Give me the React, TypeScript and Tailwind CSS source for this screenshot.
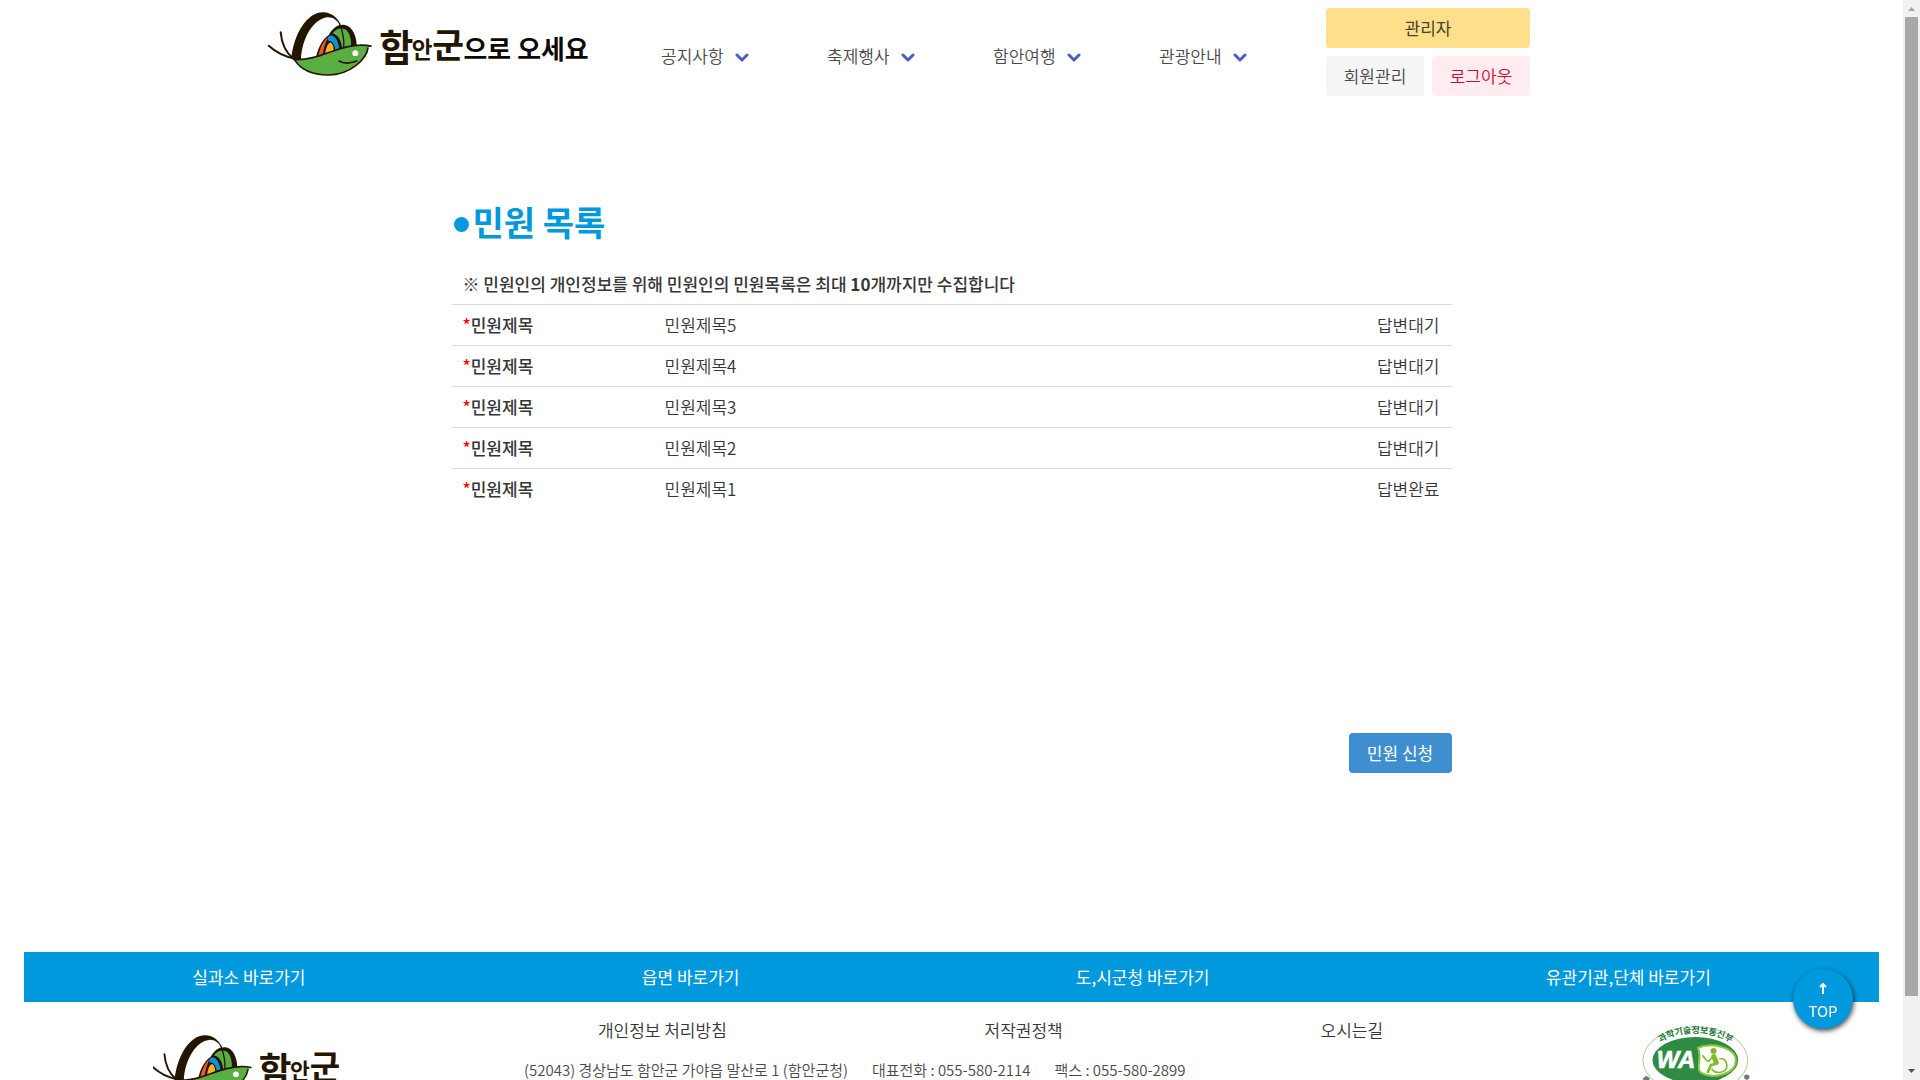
import React from "react";

function Emblem() {
  return (
    <g strokeLinecap="round" strokeLinejoin="round">
      <path d="M55 134 Q88 164 132 172" fill="none" stroke="#231500" strokeWidth="6" />
      <path d="M91 93 Q95 145 130 174" fill="none" stroke="#231500" strokeWidth="6" />
      <path d="M123 173 C130 100 170 33 218 33 C250 33 270 58 272 76 C262 56 247 46 231 48 C190 53 155 110 152 175 Z" fill="#231500" />
      <path d="M236 102 C248 78 266 69 284 71 C306 75 321 102 320 140 L240 150 Z" fill="#231500" />
      <path d="M247 97 C258 80 283 75 294 92 C303 106 304 124 303 138 L276 144 C275 118 264 100 247 97 Z" fill="#5aae41" />
      <path d="M268 66 C276 86 284 108 281 140" fill="none" stroke="#231500" strokeWidth="4" />
      <path d="M197 170 C204 136 222 104 246 97 C264 100 273 124 272 148 Z" fill="#231500" />
      <path d="M204 166 C208 144 219 120 232 109 C226 126 219 146 217 164 Z" fill="#e9562e" />
      <path d="M233 108 C250 92 266 118 268 146 L256 150 C254 128 246 118 232 118 Z" fill="#0a93d8" />
      <path d="M225 160 C227 138 235 124 242 124 C250 130 252 142 250 153 Z" fill="#fbb02c" />
      <path d="M132 175 C205 180 262 132 330 132 Q348 132 363 135 L354 140 C360 158 302 222 235 222 C185 222 152 208 132 175 Z" fill="#5aae41" />
      <path d="M132 175 C205 180 262 132 330 132 Q348 131 363 135 M354 141 C350 172 302 222 235 222 C185 222 152 208 132 175" fill="none" stroke="#231500" strokeWidth="5" />
      <circle cx="316" cy="156" r="9" fill="#fff" />
      <path d="M267 180 Q288 192 320 180" fill="none" stroke="#231500" strokeWidth="5" />
    </g>
  );
}

function CountyName() {
  return (
    <>
      <tspan x="388" y="182" fontSize="112">함</tspan>
      <tspan x="486" y="170" fontSize="68">안</tspan>
      <tspan x="548" y="170" fontSize="104">군</tspan>
    </>
  );
}

function HeaderLogo() {
  return (
    <svg viewBox="40 20 990 220" className="block h-[73px] w-[330px]" role="img" aria-label="함안군으로 오세요">
      <Emblem />
      <text className="font-['Noto_Sans_CJK_KR',sans-serif] font-bold" fill="#231500">
        <CountyName />
      </text>
      <text className="font-['Noto_Sans_CJK_KR',sans-serif] font-bold" fill="#0c0a06" fontSize="78">
        <tspan x="642" y="174">으로</tspan>
        <tspan x="804" y="174">오세요</tspan>
      </text>
    </svg>
  );
}

function FooterLogo() {
  return (
    <svg viewBox="55 30 620 200" className="block h-[64px] w-[197px]" role="img" aria-label="함안군">
      <Emblem />
      <text className="font-['Noto_Sans_CJK_KR',sans-serif] font-bold" fill="#231500">
        <CountyName />
      </text>
    </svg>
  );
}

function WebAccessMark() {
  return (
    <svg viewBox="0 0 330 220" className="block h-[73px] w-[110px]" role="img" aria-label="과학기술정보통신부 WA 웹 접근성">
      <defs>
        <path id="ministry" d="M44 58 C100 10 218 10 278 58" />
      </defs>
      <ellipse cx="160" cy="103" rx="158" ry="101" fill="#fff" stroke="#a5cf8a" strokeWidth="3" />
      <text className="font-['Noto_Sans_CJK_KR',sans-serif] font-bold" fontSize="27" fill="#22753a">
        <textPath href="#ministry" startOffset="50%" textAnchor="middle">과학기술정보통신부</textPath>
      </text>
      <ellipse cx="160" cy="103" rx="129" ry="70" fill="#2f8b43" />
      <path d="M168 66 C200 48 282 62 282 104 C282 146 212 162 176 140 C160 126 182 100 168 66 Z" fill="#fff" stroke="#8cc63f" strokeWidth="6" />
      <text x="44" y="126" className="font-['Liberation_Sans',sans-serif] font-bold italic" fontSize="72" fill="#fff" stroke="#fff" strokeWidth="2">
        WA
      </text>
      <g fill="none" stroke="#7fba2c" strokeLinecap="round" strokeLinejoin="round">
        <path d="M216 92 L223 110" strokeWidth="15" />
        <path d="M223 114 L207 118 L198 138" strokeWidth="8" />
        <path d="M212 92 L201 106 L194 104 L183 90" strokeWidth="5" />
        <path d="M234 98 C258 98 262 130 242 138 C228 143 214 138 210 130" strokeWidth="5" />
      </g>
      <circle cx="215" cy="75" r="9" fill="#7fba2c" />
      <path d="M90 156 Q160 184 236 156" fill="none" stroke="#2f8b43" strokeWidth="6" />
      <path d="M0 160 l12 -10 l12 8 l-8 10 Z" fill="#777" />
      <circle cx="315" cy="154" r="8" fill="#777" />
    </svg>
  );
}

const menu = ["공지사항", "축제행사", "함안여행", "관광안내"];

const complaints = [
  { title: "민원제목5", status: "답변대기" },
  { title: "민원제목4", status: "답변대기" },
  { title: "민원제목3", status: "답변대기" },
  { title: "민원제목2", status: "답변대기" },
  { title: "민원제목1", status: "답변완료" },
];

const shortcuts = ["실과소 바로가기", "읍면 바로가기", "도,시군청 바로가기", "유관기관,단체 바로가기"];
const policies = ["개인정보 처리방침", "저작권정책", "오시는길"];

function Header() {
  return (
    <header className="flex items-start pt-2 pl-[263px]">
      <a href="#home" className="shrink-0">
        <HeaderLogo />
      </a>
      <nav className="ml-[68px] flex pt-9">
        {menu.map((label) => (
          <button key={label} type="button" className="flex w-[166px] items-center gap-[11px] text-[#4a4a4a]">
            {label}
            <svg viewBox="0 0 14 10" className="mt-1 h-[10px] w-[14px]" fill="none" stroke="#485fc7" strokeWidth="3" strokeLinecap="round" strokeLinejoin="round" aria-hidden="true">
              <path d="M2 2 L7 7 L12 2" />
            </svg>
          </button>
        ))}
      </nav>
      <div className="ml-px grid w-[204px] grid-cols-2 gap-2">
        <button type="button" className="col-span-2 h-10 rounded bg-[#ffe08a] font-normal text-[#4a4228]">
          관리자
        </button>
        <button type="button" className="h-10 rounded bg-[#f5f5f5] text-[#4a4a4a]">
          회원관리
        </button>
        <button type="button" className="h-10 rounded bg-[#feecf0] text-[#cc0f35]">
          로그아웃
        </button>
      </div>
    </header>
  );
}

function ComplaintList() {
  return (
    <main className="mx-auto mt-[100px] w-full max-w-[1000px]">
      <h1 className="flex items-center text-[34px] leading-[52px] font-bold text-[#0099dd]">
        <span className="mt-1 mr-1 ml-0.5 size-[15px] rounded-full bg-[#0099dd]" aria-hidden="true" />
        민원 목록
      </h1>
      <table className="mt-4 w-full table-fixed text-left text-[#363636]">
        <colgroup>
          <col className="w-[202px]" />
          <col />
          <col className="w-[200px]" />
        </colgroup>
        <thead>
          <tr>
            <th colSpan={3} className="px-[11px] py-2 font-medium">
              ※ 민원인의 개인정보를 위해 민원인의 민원목록은 최대 <b className="font-bold">10</b>개까지만 수집합니다
            </th>
          </tr>
        </thead>
        <tbody>
          {complaints.map((c) => (
            <tr key={c.title} className="border-t border-[#dbdbdb]">
              <th scope="row" className="px-[11px] py-2 font-medium">
                <span className="text-[#ff0000]">*</span>민원제목
              </th>
              <td className="px-[11px] py-2">
                <a href="#complaint">{c.title}</a>
              </td>
              <td className="px-3 py-2 text-right">{c.status}</td>
            </tr>
          ))}
        </tbody>
      </table>
      <div className="mt-[224px] flex justify-end">
        <button type="button" className="h-10 w-[103px] rounded bg-[#3e8ed0] font-normal text-white">
          민원 신청
        </button>
      </div>
    </main>
  );
}

function Footer() {
  return (
    <footer className="mt-[179px] px-6">
      <div className="flex h-[50px] items-center justify-around bg-[#0099dd] font-normal text-white">
        {shortcuts.map((s) => (
          <button key={s} type="button">
            {s}
          </button>
        ))}
      </div>
      <div className="flex">
        <div className="w-[445px] pt-8 pl-[129px]">
          <FooterLogo />
        </div>
        <div className="min-w-0 flex-1 pt-4">
          <div className="flex justify-around text-[#363636]">
            {policies.map((p) => (
              <a key={p} href="#policy">
                {p}
              </a>
            ))}
          </div>
          <address className="mt-4 flex gap-6 pl-[55px] text-[15px] whitespace-nowrap text-[#4a4a4a] not-italic">
            <span>(52043) 경상남도 함안군 가야읍 말산로 1 (함안군청)</span>
            <span>대표전화 : 055-580-2114</span>
            <span>팩스 : 055-580-2899</span>
          </address>
        </div>
        <div className="w-[367px] pt-6 pl-[130px]">
          <WebAccessMark />
        </div>
      </div>
    </footer>
  );
}

function ScrollTrack() {
  return (
    <div className="flex h-full w-[17px] shrink-0 flex-col items-center bg-[#f1f1f1]" aria-hidden="true">
      <svg viewBox="0 0 17 17" className="size-[17px] shrink-0">
        <path d="M5 11 L8.500 7 L12 11 Z" fill="#a3a3a3" />
      </svg>
      <div className="w-[13px] flex-[979] bg-[#a8a8a8]" />
      <div className="flex-[67]" />
      <svg viewBox="0 0 17 17" className="size-[17px] shrink-0">
        <path d="M5 6 L12 6 L8.500 10 Z" fill="#505050" />
      </svg>
    </div>
  );
}

export default function App() {
  return (
    <div className="flex h-screen overflow-hidden bg-white font-['Noto_Sans_CJK_KR',sans-serif] text-[17px] leading-6 font-[350]">
      <div className="min-w-0 flex-1 overflow-hidden">
        <Header />
        <ComplaintList />
        <Footer />
      </div>
      <ScrollTrack />
      <a
        href="#top"
        className="fixed right-[67px] bottom-[51px] flex size-[60px] flex-col items-center justify-center rounded-full bg-[#0099dd] text-[15px] leading-[22px] font-normal text-white shadow-[1px_2px_5px_rgba(0,0,0,0.7)]"
      >
        <svg viewBox="0 0 8 11" className="my-1.5 h-[11px] w-2" fill="none" stroke="#fff" strokeWidth="2" aria-hidden="true">
          <path d="M4 11 V2 M1 4 L4 1 L7 4" />
        </svg>
        TOP
      </a>
    </div>
  );
}
